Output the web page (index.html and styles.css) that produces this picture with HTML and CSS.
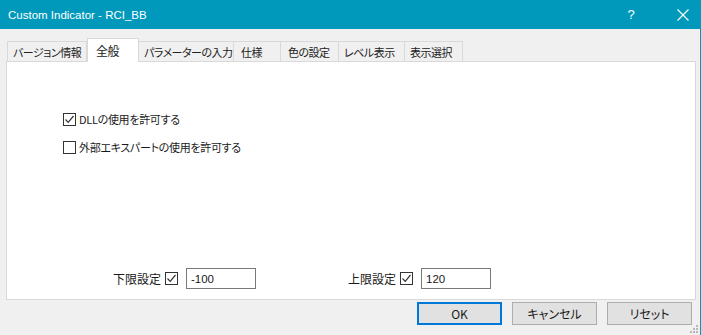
FILE: index.html
```html
<!DOCTYPE html>
<html lang="ja">
<head>
    <meta charset="UTF-8">
    <title>Custom Indicator - RCI_BB</title>
    <link rel="stylesheet" href="styles.css">
</head>
<body>
    <div class="window">
        <div class="titlebar">
            <span class="title">Custom Indicator - RCI_BB</span>
            <span class="help">?</span>
            <span class="close">
                <svg width="12" height="12" viewBox="0 0 12 12"><path d="M0.5 0.5 L11.5 11.5 M11.5 0.5 L0.5 11.5" stroke="#fff" stroke-width="1.1" fill="none"/></svg>
            </span>
        </div>
        <div class="dialog">
            <div class="tabs">
                <div class="tab w1">バージョン情報</div>
                <div class="tab active">全般</div>
                <div class="tab w3">パラメーターの入力</div>
                <div class="tab w4">仕様</div>
                <div class="tab w5">色の設定</div>
                <div class="tab w6">レベル表示</div>
                <div class="tab w7">表示選択</div>
            </div>
            <div class="panel">
                <label class="check first">
                    <span class="box checked"><svg width="11" height="11" viewBox="0 0 11 11"><path d="M1.5 5.5 L4.2 8.3 L9.5 2" stroke="#333" stroke-width="1.2" fill="none"/></svg></span>
                    DLLの使用を許可する
                </label>
                <label class="check">
                    <span class="box"></span>
                    外部エキスパートの使用を許可する
                </label>
                <div class="limits">
                    <div class="limit">
                        <span class="limit-label">下限設定</span>
                        <span class="box checked"><svg width="11" height="11" viewBox="0 0 11 11"><path d="M1.5 5.5 L4.2 8.3 L9.5 2" stroke="#333" stroke-width="1.2" fill="none"/></svg></span>
                        <span class="field">-100</span>
                    </div>
                    <div class="limit">
                        <span class="limit-label">上限設定</span>
                        <span class="box checked"><svg width="11" height="11" viewBox="0 0 11 11"><path d="M1.5 5.5 L4.2 8.3 L9.5 2" stroke="#333" stroke-width="1.2" fill="none"/></svg></span>
                        <span class="field">120</span>
                    </div>
                </div>
            </div>
            <div class="buttons">
                <button class="btn default">OK</button>
                <button class="btn">キャンセル</button>
                <button class="btn">リセット</button>
            </div>
            <div class="grip">
                <svg width="8" height="8" viewBox="0 0 8 8" fill="#b8b8b8">
                    <rect x="6" y="0" width="2" height="2"/>
                    <rect x="3" y="3" width="2" height="2"/><rect x="6" y="3" width="2" height="2"/>
                    <rect x="0" y="6" width="2" height="2"/><rect x="3" y="6" width="2" height="2"/><rect x="6" y="6" width="2" height="2"/>
                </svg>
            </div>
        </div>
    </div>
</body>
</html>
```

FILE: styles.css
```css
body {
    margin: 0;
    font-family: "Noto Sans CJK JP", "Noto Sans", sans-serif;
    font-size: 11px;
    font-feature-settings: "palt";
    letter-spacing: -0.3px;
    color: #1a1a1a;
    background: #f0f0f0;
}
.window {
    width: 700px;
    height: 335px;
    border-right: 1px solid #0099bc;
    background: #f0f0f0;
    position: relative;
}
.titlebar {
    height: 29px;
    background: #0099bc;
    color: #fff;
    display: flex;
    align-items: center;
    font-family: "Liberation Sans", Arial, sans-serif;
    font-size: 11.5px;
    letter-spacing: 0;
}
.title {
    padding-left: 8px;
    flex: 1;
}
.help {
    width: 34px;
    margin-right: 18px;
    text-align: center;
    font-size: 13px;
}
.close {
    width: 34px;
    display: flex;
    justify-content: center;
}
.dialog {
    padding: 9px 0 0 6px;
}
.tabs {
    display: flex;
    align-items: flex-end;
    height: 23px;
    padding-left: 1px;
    white-space: nowrap;
    letter-spacing: -0.5px;
}
.tab {
    height: 20px;
    box-sizing: border-box;
    border: 1px solid #d9d9d9;
    border-bottom: none;
    border-left: none;
    background: #f0f0f0;
    display: flex;
    align-items: center;
    padding-left: 5px;
    color: #222;
}
.tab.w1 { width: 80px; border-left: 1px solid #d9d9d9; }
.tab.w3 { width: 96px; border-left: 1px solid #d9d9d9; }
.tab.w4 { width: 47px; padding-left: 7px; }
.tab.w5 { width: 58px; padding-left: 7px; }
.tab.w6 { width: 66px; }
.tab.w7 { width: 58px; }
.tab.active {
    width: 52px;
    height: 24px;
    margin: 0 -1px -1px 0;
    background: #fff;
    border-left: 1px solid #d9d9d9;
    padding-left: 8px;
    padding-bottom: 1px;
    position: relative;
    z-index: 1;
    font-size: 12px;
}
.panel {
    width: 690px;
    height: 239px;
    box-sizing: border-box;
    background: #fff;
    border: 1px solid #d9d9d9;
    display: flex;
    flex-direction: column;
    padding: 0 0 10px 56px;
}
.check {
    display: flex;
    align-items: center;
    gap: 3px;
    height: 14px;
}
.check.first {
    margin-top: 50px;
    margin-bottom: 14px;
}
.box {
    width: 13px;
    height: 13px;
    box-sizing: border-box;
    border: 1px solid #333;
    background: #fff;
    display: flex;
    align-items: center;
    justify-content: center;
    flex: none;
}
.limits {
    margin-top: auto;
    display: flex;
    gap: 92px;
    padding-left: 50px;
}
.limit {
    display: flex;
    align-items: center;
}
.limit-label {
    width: 50px;
    margin-right: 2px;
    font-size: 12px;
    letter-spacing: 0;
}
.field {
    width: 70px;
    height: 21px;
    box-sizing: border-box;
    border: 1px solid #7a7a7a;
    margin-left: 8px;
    padding-left: 4px;
    display: flex;
    align-items: center;
    font-family: "Liberation Sans", Arial, sans-serif;
    font-size: 11.5px;
    letter-spacing: 0;
}
.buttons {
    display: flex;
    justify-content: flex-end;
    gap: 10px;
    padding-right: 8px;
    margin-top: 2px;
}
.btn {
    width: 85px;
    height: 23px;
    box-sizing: border-box;
    background: #e1e1e1;
    border: 1px solid #adadad;
    font-family: "Noto Sans CJK JP", "Liberation Sans", sans-serif;
    font-size: 12px;
    font-feature-settings: "palt";
    color: #1a1a1a;
    padding: 0;
}
.btn.default {
    border: 2px solid #0078d7;
}
.grip {
    position: absolute;
    right: 2px;
    bottom: 2px;
    line-height: 0;
}
```
